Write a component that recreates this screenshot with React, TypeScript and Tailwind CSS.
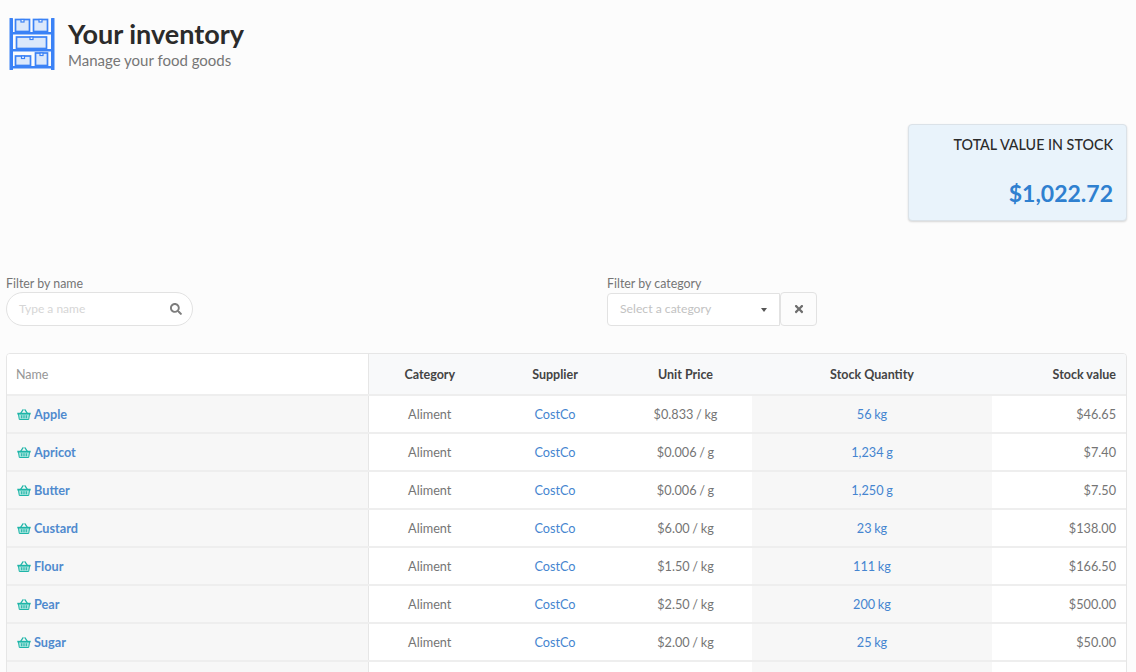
import { FaSearch, FaTimes } from "react-icons/fa"

type Item = {
  name: string
  price: string
  quantity: string
  value: string
}

const items: Item[] = [
  { name: "Apple", price: "$0.833 / kg", quantity: "56 kg", value: "$46.65" },
  { name: "Apricot", price: "$0.006 / g", quantity: "1,234 g", value: "$7.40" },
  { name: "Butter", price: "$0.006 / g", quantity: "1,250 g", value: "$7.50" },
  { name: "Custard", price: "$6.00 / kg", quantity: "23 kg", value: "$138.00" },
  { name: "Flour", price: "$1.50 / kg", quantity: "111 kg", value: "$166.50" },
  { name: "Pear", price: "$2.50 / kg", quantity: "200 kg", value: "$500.00" },
  { name: "Sugar", price: "$2.00 / kg", quantity: "25 kg", value: "$50.00" },
]

function ShelfIcon() {
  return (
    <svg width="46" height="54" viewBox="0 0 46 54" className="shrink-0">
      <g fill="#dbe8fb" stroke="#3b82f6" strokeWidth="1.7">
        <rect x="6.5" y="2.5" width="14" height="12" />
        <rect x="24.5" y="2.5" width="14" height="12" />
        <rect x="7.5" y="20" width="30" height="11.5" />
        <rect x="6.5" y="39" width="15" height="9.5" />
        <rect x="26.5" y="36" width="12" height="12.5" />
      </g>
      <g fill="#ffffff" stroke="#3b82f6" strokeWidth="1.2">
        <rect x="12" y="2.5" width="3" height="2.5" />
        <rect x="30" y="2.5" width="3" height="2.5" />
        <rect x="21" y="20" width="3" height="2.5" />
        <rect x="12.5" y="39" width="3" height="2.5" />
        <rect x="31" y="36" width="3" height="2.5" />
      </g>
      <g fill="#3b82f6">
        <rect x="0.5" y="1" width="3.5" height="52" rx="0.5" />
        <rect x="42" y="1" width="3.5" height="52" rx="0.5" />
        <rect x="3" y="15" width="40" height="2.5" />
        <rect x="3" y="32" width="40" height="2.5" />
        <rect x="3" y="49" width="40" height="2.5" />
      </g>
    </svg>
  )
}

function BasketIcon() {
  return (
    <svg width="14" height="11" viewBox="0 0 14 11" className="shrink-0">
      <path d="M3.5 4.5 6 0.8M10.5 4.5 8 0.8" fill="none" stroke="#1fb5a8" strokeWidth="1.3" strokeLinecap="round" />
      <path d="M0.3 3.8h13.4v1.6h-13.4z" fill="#1fb5a8" />
      <path d="M1.4 5h11.2l-0.9 5.5H2.3z" fill="#a5e4dd" stroke="#1fb5a8" strokeWidth="1" />
      <path d="M4.7 6.3v3M7 6.3v3M9.3 6.3v3" stroke="#1fb5a8" strokeWidth="1.1" />
    </svg>
  )
}

export default function App() {
  return (
    <div className="h-screen overflow-hidden bg-[#fcfcfc] font-['Lato','Open_Sans',sans-serif] text-[12.7px] text-[#757575]">
      <header className="flex items-start gap-[13px] pl-[9px] pt-[17px]">
        <ShelfIcon />
        <div className="pt-px">
          <h1 className="text-[27px] font-bold leading-[32px] text-[#2b2b2b]">Your inventory</h1>
          <p className="mt-px text-[15px] leading-[18px] text-[#767676]">Manage your food goods</p>
        </div>
      </header>

      <div className="mt-[53px] flex justify-end pr-[9px]">
        <div className="h-[97px] w-[219px] rounded border border-[#dbe2e8] bg-[#e9f3fb] px-[13px] pt-[11px] text-right shadow-[0_1px_2px_rgba(0,0,0,0.15)]">
          <div className="text-[14.3px] font-medium leading-[18px] text-[#2b2b2b]">TOTAL VALUE IN STOCK</div>
          <div className="mt-[24px] text-[23px] font-bold leading-[30px] text-[#2f80d0]">$1,022.72</div>
        </div>
      </div>

      <div className="mt-[55px] flex pl-[6px]">
        <div className="w-[601px]">
          <label className="block text-[12.4px] leading-[15px]">Filter by name</label>
          <div className="mt-px flex h-[34px] w-[187px] items-center justify-between rounded-full border border-[#e2e2e2] bg-white pl-[12px] pr-[10px]">
            <span className="text-[12px] text-[#d6d6d6]">Type a name</span>
            <FaSearch size={12} className="text-[#7d7d7d]" />
          </div>
        </div>
        <div>
          <label className="block text-[12.4px] leading-[15px]">Filter by category</label>
          <div className="mt-px flex">
            <div className="mt-px flex h-[33px] w-[173px] items-center justify-between rounded-l border border-[#e2e2e2] bg-white pl-[12px] pr-[12px]">
              <span className="text-[12.2px] text-[#c2c2c2]">Select a category</span>
              <span className="h-0 w-0 border-x-[3.5px] border-t-[4px] border-x-transparent border-t-[#555555]" />
            </div>
            <button className="flex h-[34px] w-[37px] items-center justify-center rounded border border-[#e2e2e2] bg-[#fcfcfc]">
              <FaTimes size={12} className="text-[#6e6e6e]" />
            </button>
          </div>
        </div>
      </div>

      <div className="ml-[6px] mt-[27px] w-[1121px] overflow-hidden rounded-t border border-[#e6e6e6]">
        <table className="w-full table-fixed border-collapse">
          <colgroup>
            <col className="w-[361px]" />
            <col className="w-[123px]" />
            <col className="w-[128px]" />
            <col className="w-[133px]" />
            <col className="w-[240px]" />
            <col />
          </colgroup>
          <thead>
            <tr className="h-[41px] border-b-2 border-[#eeeeee] text-[12.5px]">
              <th className="border-r border-[#e6e6e6] bg-white pl-[9px] pt-[2px] text-left font-normal text-[#969696]">Name</th>
              <th className="bg-[#f8f9fa] pt-[2px] text-center font-bold text-[#444444]">Category</th>
              <th className="bg-[#f8f9fa] pt-[2px] text-center font-bold text-[#444444]">Supplier</th>
              <th className="bg-[#f8f9fa] pt-[2px] text-center font-bold text-[#444444]">Unit Price</th>
              <th className="bg-[#f8f9fa] pt-[2px] text-center font-bold text-[#444444]">Stock Quantity</th>
              <th className="bg-[#f8f9fa] pr-[10px] pt-[2px] text-right font-bold text-[#444444]">Stock value</th>
            </tr>
          </thead>
          <tbody>
            {items.map((item) => (
              <tr key={item.name} className="h-[38px] border-b-2 border-[#eeeeee]">
                <td className="border-r border-[#e6e6e6] bg-[#f7f7f7] pl-[10px] pt-[2px]">
                  <div className="flex items-center gap-[3px] font-bold text-[#4f8ace]">
                    <BasketIcon />
                    {item.name}
                  </div>
                </td>
                <td className="bg-white pt-[2px] text-center">Aliment</td>
                <td className="bg-white pt-[2px] text-center text-[#4585d0]">CostCo</td>
                <td className="bg-white pt-[2px] text-center [word-spacing:-0.6px]">{item.price}</td>
                <td className="bg-[#f7f7f7] pt-[2px] text-center text-[#4585d0] [word-spacing:-0.6px]">{item.quantity}</td>
                <td className="bg-white pr-[10px] pt-[2px] text-right">{item.value}</td>
              </tr>
            ))}
            <tr className="h-[38px]">
              <td className="border-r border-[#e6e6e6] bg-[#f7f7f7]" />
              <td className="bg-white" />
              <td className="bg-white" />
              <td className="bg-white" />
              <td className="bg-[#f7f7f7]" />
              <td className="bg-white" />
            </tr>
          </tbody>
        </table>
      </div>
    </div>
  )
}
